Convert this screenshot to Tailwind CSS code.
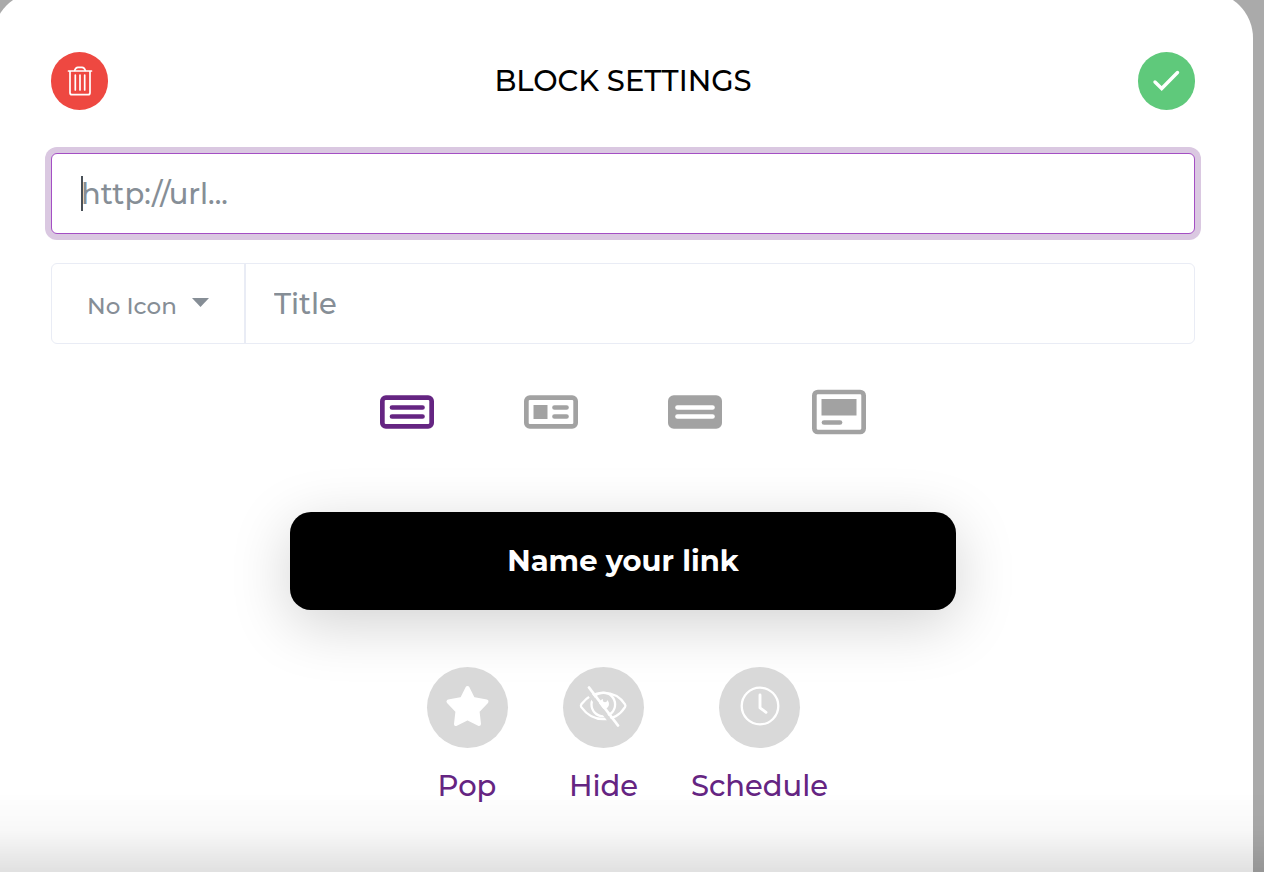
<!DOCTYPE html>
<html lang="en">
<head>
  <meta charset="UTF-8" />
  <meta name="viewport" content="width=device-width, initial-scale=1" />
  <title>Block Settings</title>
  <script src="https://cdn.jsdelivr.net/npm/@tailwindcss/browser@4"></script>
</head>
<body class="bg-[#aaaaaa] font-[Montserrat,Inter,sans-serif] font-medium overflow-hidden">
  <div class="flow-root min-h-screen">
    <main class="-mt-2 -ml-[7px] mr-[11px] min-h-[calc(100vh+8px)] rounded-t-[46px] bg-white px-[58px] pt-[60px]">

      <!-- Header -->
      <header class="flex items-center justify-between">
        <button type="button" aria-label="Delete block" class="w-[57px] h-[58px] rounded-full bg-[#ee4841] flex items-center justify-center">
          <svg class="w-[26px] h-[30px]" viewBox="0 0 26 30" fill="none" stroke="white" stroke-width="1.7" stroke-linecap="round" stroke-linejoin="round">
            <path d="M1.500 5h23M3 5v21.700a2 2 0 0 0 2 2h16a2 2 0 0 0 2-2V5" />
            <path d="M7.700 4.500c.5-2 1.700-3.200 3.200-3.200h4.200c1.500 0 2.700 1.200 3.200 3.200" />
            <path d="M8.300 9v15M13 9v15M17.700 9v15" />
          </svg>
        </button>
        <h1 class="text-[29px] leading-9 text-black">BLOCK SETTINGS</h1>
        <button type="button" aria-label="Save block" class="w-[57px] h-[58px] rounded-full bg-[#5fc97b] flex items-center justify-center">
          <svg class="w-7 h-6" viewBox="0 0 28 24" fill="none" stroke="white" stroke-width="3.4" stroke-linecap="round" stroke-linejoin="miter">
            <path d="M3 13L9.700 19.500L25.500 3.500" />
          </svg>
        </button>
      </header>

      <!-- Fields -->
      <form>
        <div class="relative mt-[43px]">
          <input type="text" aria-label="URL" placeholder="http://url..." class="block w-full h-[81px] rounded-md border border-[#a44fc4] bg-white px-[29px] text-[29px] text-[#495057] placeholder:text-[#868e96] outline-none ring-[6px] ring-[#dac8e1]" />
          <span class="absolute left-[30px] top-[23px] h-[35px] w-0.5 bg-[#495057]"></span>
        </div>

        <div class="mt-[29px] flex h-[81px] rounded-md border border-[#e9ecf5]">
          <div class="relative w-[194px] shrink-0 border-r-2 border-[#e9ecf5]">
            <select aria-label="Icon" class="size-full appearance-none bg-transparent pl-[35px] pt-1.5 text-[23px] text-[#868e96] outline-none">
              <option>No Icon</option>
            </select>
            <svg class="absolute right-[35px] top-[34px] w-[17px] h-[9px] pointer-events-none" viewBox="0 0 17 9" fill="#868e96"><path d="M0 0h17L8.500 9z" /></svg>
          </div>
          <input type="text" aria-label="Title" placeholder="Title" class="min-w-0 flex-1 bg-transparent px-7 text-[29px] text-[#495057] placeholder:text-[#868e96] outline-none" />
        </div>

        <!-- Block layout -->
        <div class="mt-[45px] flex items-center justify-center gap-[90px]">
          <label class="relative text-[#652582]">
            <input type="radio" name="layout" aria-label="Outline" class="sr-only" checked />
            <svg class="w-[54px] h-[46px]" viewBox="0 0 54 46" fill="none" stroke="currentColor" stroke-width="4.700">
              <rect x="2.350" y="8.550" width="49.300" height="28.900" rx="3.500" />
              <path d="M12 18.500h30.500M12 27.500h30.500" stroke-linecap="round" />
            </svg>
          </label>
          <label class="relative text-[#a2a2a2]">
            <input type="radio" name="layout" aria-label="Thumbnail" class="sr-only" />
            <svg class="w-[54px] h-[46px]" viewBox="0 0 54 46" fill="none" stroke="currentColor" stroke-width="4.700">
              <rect x="2.350" y="8.550" width="49.300" height="28.900" rx="3.500" />
              <path d="M9.500 16h14v14h-14z" fill="currentColor" stroke="none" />
              <path d="M30.500 18.500h12M30.500 27.500h12" stroke-linecap="round" />
            </svg>
          </label>
          <label class="relative text-[#a2a2a2]">
            <input type="radio" name="layout" aria-label="Filled" class="sr-only" />
            <svg class="w-[54px] h-[46px]" viewBox="0 0 54 46" fill="none">
              <rect y="6.200" width="54" height="33.600" rx="5.800" fill="currentColor" />
              <path d="M9.500 18.500h35M9.500 27.500h35" stroke="white" stroke-width="4.700" stroke-linecap="round" />
            </svg>
          </label>
          <label class="relative text-[#a2a2a2]">
            <input type="radio" name="layout" aria-label="Card" class="sr-only" />
            <svg class="w-[54px] h-[46px]" viewBox="0 0 54 46" fill="none" stroke="currentColor" stroke-width="4.700">
              <rect x="2.350" y="3" width="49.300" height="40" rx="3.500" />
              <path d="M9.500 10h35v16.500h-35z" fill="currentColor" stroke="none" />
              <path d="M12 33.500h16" stroke-linecap="round" />
            </svg>
          </label>
        </div>

        <!-- Preview -->
        <button type="button" class="mx-auto mt-[77px] block h-[98px] w-full max-w-[666px] rounded-[21px] bg-black text-[29px] font-bold text-white shadow-[0_14px_60px_rgba(0,0,0,0.18)]">Name your link</button>
      </form>

      <!-- Actions -->
      <div class="relative mt-[57px] flex justify-center text-[29px] leading-9 text-[#652582]">
        <button type="button" class="flex w-[137px] flex-col items-center gap-5">
          <span class="size-[81px] rounded-full bg-[#d9d9d9]">
            <svg class="size-full" viewBox="0 0 81 81" fill="white" stroke="white" stroke-width="4" stroke-linejoin="round">
              <path d="M40.500 21L46 32L59.500 34.500L50.500 44L52 57L40.500 51.200L29 57L30.500 44L21.500 34.500L35 32z" />
            </svg>
          </span>
          Pop
        </button>
        <button type="button" class="flex w-[136px] flex-col items-center gap-5">
          <span class="size-[81px] rounded-full bg-[#d9d9d9]">
            <svg class="size-full" viewBox="0 0 81 81" fill="none" stroke="white" stroke-width="2.300" stroke-linecap="round">
              <path d="M18.300 37.300C24 29.500 31 25.800 40.500 25.800S57 29.500 62 37.300c.6 1 .6 1.800 0 2.800C57 48 50 52.200 40.500 52.200S24 48 18.300 40.100c-.6-1-.6-1.800 0-2.800z" />
              <circle cx="40.300" cy="37.500" r="11.800" />
              <circle cx="41" cy="37" r="5" fill="white" stroke="none" />
              <circle cx="42" cy="33" r="2.200" fill="#d9d9d9" stroke="none" />
              <path d="M23 22.500L51.500 60" stroke="#d9d9d9" stroke-width="4" />
              <path d="M26 20.500L55 58.500" stroke-width="2.800" />
            </svg>
          </span>
          Hide
        </button>
        <button type="button" class="flex w-[176px] flex-col items-center gap-5">
          <span class="size-[81px] rounded-full bg-[#d9d9d9]">
            <svg class="size-full" viewBox="0 0 81 81" fill="none" stroke="white" stroke-linecap="round" stroke-linejoin="round">
              <circle cx="41" cy="39" r="18.300" stroke-width="2.300" />
              <path d="M41 28v12.800l6 4.500" stroke-width="2.900" />
            </svg>
          </span>
          Schedule
        </button>
      </div>
    </main>
  </div>

  <!-- Bottom fade -->
  <div class="pointer-events-none fixed inset-x-0 bottom-0 h-20 bg-linear-to-b from-black/0 via-black/3 to-black/12"></div>
</body>
</html>
